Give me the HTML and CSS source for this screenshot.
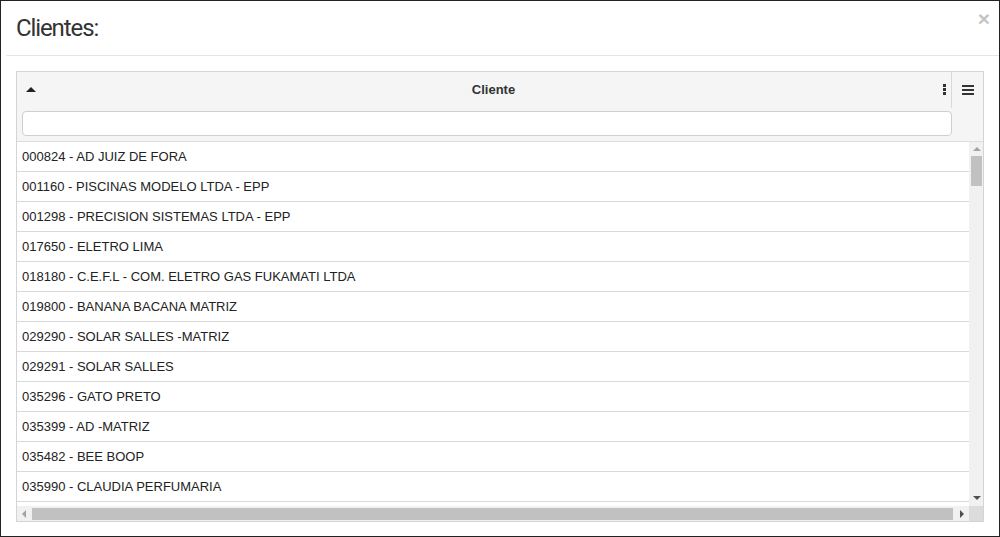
FILE: index.html
```html
<!DOCTYPE html>
<html lang="pt">
<head>
<meta charset="utf-8">
<title>Clientes</title>
<link rel="stylesheet" href="styles.css">
</head>
<body>
<div class="modal">
  <div class="modal-header">
    <h4 class="modal-title">Clientes:</h4>
    <button class="close" type="button">&times;</button>
  </div>
  <div class="modal-body">
    <div class="grid">
      <div class="grid-head">
        <div class="head-row">
          <div class="col-head">
            <span class="sort-icon"></span>
            <span class="col-label">Cliente</span>
            <span class="col-menu"><i></i><i></i><i></i></span>
          </div>
          <div class="grid-menu"><span class="burger"><i></i><i></i><i></i></span></div>
        </div>
        <div class="filter-row">
          <input class="filter" type="text">
        </div>
      </div>
      <div class="grid-body">
        <div class="viewport">
          <div class="row">000824 - AD JUIZ DE FORA</div>
          <div class="row">001160 - PISCINAS MODELO LTDA - EPP</div>
          <div class="row">001298 - PRECISION SISTEMAS LTDA - EPP</div>
          <div class="row">017650 - ELETRO LIMA</div>
          <div class="row">018180 - C.E.F.L - COM. ELETRO GAS FUKAMATI LTDA</div>
          <div class="row">019800 - BANANA BACANA MATRIZ</div>
          <div class="row">029290 - SOLAR SALLES -MATRIZ</div>
          <div class="row">029291 - SOLAR SALLES</div>
          <div class="row">035296 - GATO PRETO</div>
          <div class="row">035399 - AD -MATRIZ</div>
          <div class="row">035482 - BEE BOOP</div>
          <div class="row">035990 - CLAUDIA PERFUMARIA</div>
          <div class="row row-empty"></div>
        </div>
        <div class="vscroll">
          <span class="arrow up"></span>
          <div class="vtrack"><div class="vthumb"></div></div>
          <span class="arrow down"></span>
        </div>
      </div>
      <div class="hscroll-row">
        <div class="hscroll">
          <span class="arrow left"></span>
          <div class="htrack"><div class="hthumb"></div></div>
          <span class="arrow right"></span>
        </div>
        <div class="corner"></div>
      </div>
    </div>
  </div>
</div>
</body>
</html>
```
FILE: styles.css
```css
* { box-sizing: border-box; }
html, body { margin: 0; padding: 0; background: #fff; }
body { font-family: "Liberation Sans", Arial, sans-serif; }

.modal {
  width: 1000px;
  height: 537px;
  border: 1px solid #222;
  background: #fff;
  overflow: hidden;
}

.modal-header {
  display: flex;
  justify-content: space-between;
  align-items: flex-start;
  height: 55px;
  margin-left: 5px;
  padding: 13px 9px 0 10px;
  border-bottom: 1px solid #e5e5e5;
}
.modal-title {
  margin: 0;
  font-family: Roboto, "Noto Sans", sans-serif;
  font-weight: 400;
  font-size: 24px;
  line-height: 28px;
  letter-spacing: -1.1px;
  color: #333;
}
.close {
  margin: -6px 0 0 0;
  padding: 0;
  border: 0;
  background: transparent;
  font-family: "Liberation Sans", Arial, sans-serif;
  font-size: 21px;
  font-weight: bold;
  line-height: 21px;
  color: #c4c4c4;
}

.modal-body {
  padding: 15px;
}

.grid {
  height: 451px;
  border: 1px solid #d4d4d4;
  display: flex;
  flex-direction: column;
  color: #222;
  font-size: 13px;
}

.grid-head {
  background: #f5f5f5;
  border-bottom: 1px solid #dddddd;
  height: 70px;
  flex: none;
}
.head-row {
  display: flex;
  height: 36px;
}
.col-head {
  flex: 1;
  display: flex;
  align-items: center;
  padding: 0 5px 0 9px;
  border-right: 1px solid #d9d9d9;
}
.sort-icon {
  width: 0;
  height: 0;
  border-left: 5px solid transparent;
  border-right: 5px solid transparent;
  border-bottom: 5px solid #222;
  margin-top: -1px;
}
.col-label {
  flex: 1;
  text-align: center;
  padding-left: 8px;
  margin-top: -2px;
  font-weight: bold;
  color: #333;
}
.col-menu {
  display: flex;
  flex-direction: column;
  gap: 1px;
  width: 3px;
  margin-top: -2px;
}
.col-menu i {
  display: block;
  width: 3px;
  height: 3px;
  background: #333;
}
.grid-menu {
  width: 31px;
  display: flex;
  align-items: center;
  justify-content: center;
}
.burger {
  display: flex;
  flex-direction: column;
  gap: 2px;
  width: 12px;
  margin-left: 1px;
}
.burger i {
  display: block;
  height: 2px;
  background: #333;
}

.filter-row {
  height: 33px;
  padding: 3px 31px 0 5px;
}
.filter {
  display: block;
  width: 100%;
  height: 25px;
  border: 1px solid #cfcfcf;
  border-radius: 4px;
  background: #fff;
  margin: 0;
  padding: 0 6px;
  outline: none;
}

.grid-body {
  display: flex;
  height: 364px;
  flex: none;
}
.viewport {
  flex: 1;
  overflow: hidden;
}
.row {
  height: 30px;
  line-height: 29px;
  padding-left: 5px;
  border-bottom: 1px solid #d9d9d9;
  white-space: nowrap;
}

.vscroll {
  width: 14px;
  background: #f1f1f1;
  display: flex;
  flex-direction: column;
  align-items: center;
}
.vtrack {
  flex: 1;
  width: 100%;
  padding: 0 1px 0 2px;
}
.vthumb {
  height: 30px;
  background: #c1c1c1;
}
.arrow {
  display: block;
  width: 0;
  height: 0;
  flex: none;
}
.arrow.up {
  margin: 5px 0 5px 1px;
  border-left: 4px solid transparent;
  border-right: 4px solid transparent;
  border-bottom: 4px solid #a3a3a3;
}
.arrow.down {
  margin: 5px 0 6px 1px;
  border-left: 4px solid transparent;
  border-right: 4px solid transparent;
  border-top: 4px solid #505050;
}

.hscroll-row {
  display: flex;
  height: 15px;
  flex: none;
}
.hscroll {
  flex: 1;
  display: flex;
  align-items: center;
  background: #f1f1f1;
}
.htrack {
  flex: 1;
  height: 100%;
  padding: 2px 0 1px;
}
.hthumb {
  height: 100%;
  width: 921px;
  background: #c1c1c1;
}
.arrow.left {
  margin: 0 6px 0 5px;
  border-top: 4px solid transparent;
  border-bottom: 4px solid transparent;
  border-right: 4px solid #a3a3a3;
}
.arrow.right {
  margin: 0 5px 0 5px;
  border-top: 4px solid transparent;
  border-bottom: 4px solid transparent;
  border-left: 4px solid #505050;
}
.corner {
  width: 14px;
  background: #dcdcdc;
}
```
